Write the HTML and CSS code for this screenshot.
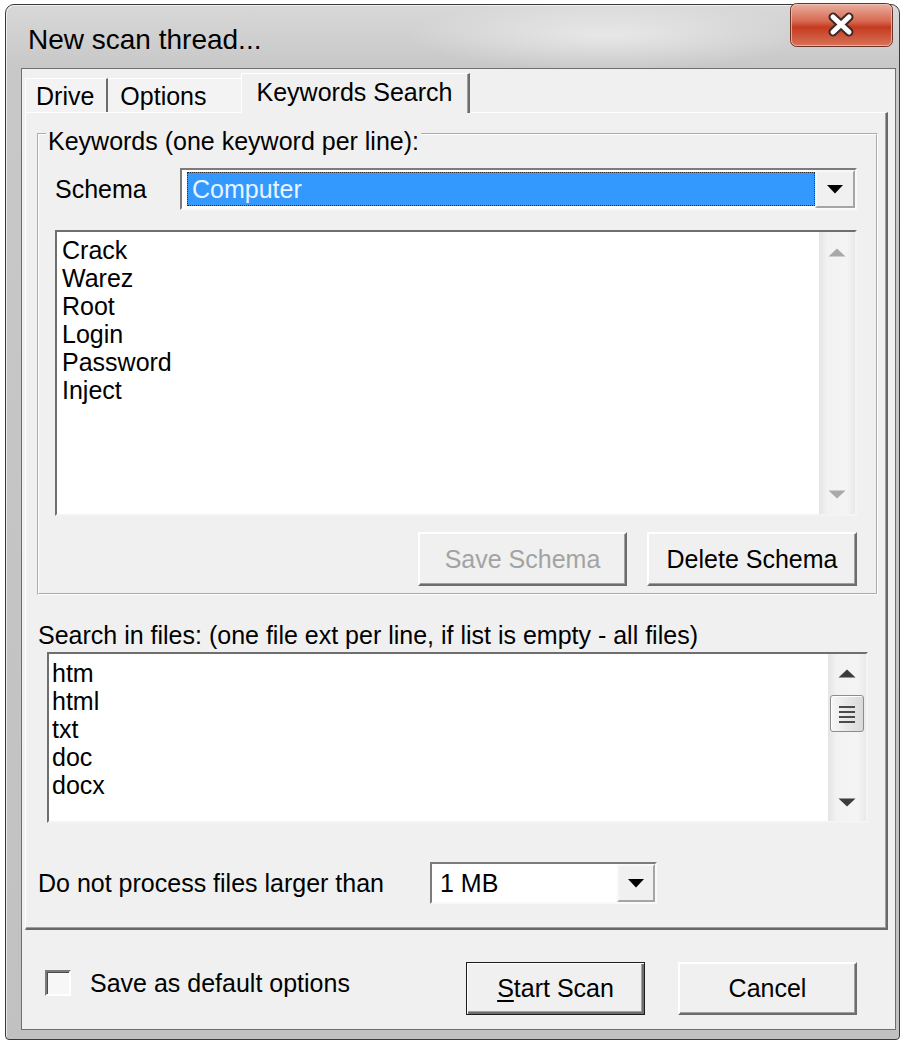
FILE: index.html
```html
<!DOCTYPE html>
<html lang="en">
<head>
<meta charset="utf-8">
<title>New scan thread...</title>
<link rel="stylesheet" href="styles.css">
</head>
<body>
<div class="window">
  <div class="titlebar">
    <span class="title">New scan thread...</span>
    <button class="close" aria-label="Close">
      <svg width="103" height="44" viewBox="0 0 103 44">
        <defs>
          <linearGradient id="closeFill" x1="0" y1="0" x2="0" y2="1">
            <stop offset="0" stop-color="#eab1a3"/>
            <stop offset="0.42" stop-color="#d7684f"/>
            <stop offset="0.55" stop-color="#c43a1f"/>
            <stop offset="1" stop-color="#d9745a"/>
          </linearGradient>
        </defs>
        <rect x="0.5" y="0.5" width="102" height="43" rx="6" fill="url(#closeFill)" stroke="#6a3329"/>
        <rect x="1.5" y="1.5" width="100" height="41" rx="5" fill="none" stroke="#f3c9bd" stroke-opacity="0.7"/>
        <path d="M43 14 L59 29 M59 14 L43 29" stroke="#3b2a28" stroke-width="9" stroke-linecap="round"/>
        <path d="M43 14 L59 29 M59 14 L43 29" stroke="#ffffff" stroke-width="5" stroke-linecap="round"/>
      </svg>
    </button>
  </div>

  <div class="client">
    <div class="tabs">
      <div class="tab tab-first">Drive</div>
      <div class="tab tab-second">Options</div>
      <div class="tab tab-active">Keywords Search</div>
    </div>

    <div class="tabpanel">
      <fieldset class="group">
        <legend>Keywords (one keyword per line):</legend>

        <div class="schema-row">
          <span class="row-label">Schema</span>
          <div class="combo combo-wide">
            <div class="combo-field selected">Computer</div>
            <div class="combo-btn">
              <svg width="16" height="9" viewBox="0 0 16 9"><polygon points="0,0 16,0 8,8.5" fill="#000"/></svg>
            </div>
          </div>
        </div>

        <div class="listbox kw-list">
          <div class="lines">
            <div>Crack</div>
            <div>Warez</div>
            <div>Root</div>
            <div>Login</div>
            <div>Password</div>
            <div>Inject</div>
          </div>
          <div class="vscroll vscroll-idle">
            <div class="sb-btn">
              <svg width="18" height="9" viewBox="0 0 18 9"><polygon points="0.5,8.5 9,0.5 17.5,8.5" fill="#a9a9a9"/></svg>
            </div>
            <div class="sb-btn">
              <svg width="18" height="9" viewBox="0 0 18 9"><polygon points="0.5,0.5 17.5,0.5 9,8.5" fill="#a9a9a9"/></svg>
            </div>
          </div>
        </div>

        <div class="btn-row">
          <button class="btn btn-save">Save Schema</button>
          <button class="btn btn-delete">Delete Schema</button>
        </div>
      </fieldset>

      <div class="field-label">Search in files: (one file ext per line, if list is empty - all files)</div>

      <div class="listbox ext-list">
        <div class="lines">
          <div>htm</div>
          <div>html</div>
          <div>txt</div>
          <div>doc</div>
          <div>docx</div>
        </div>
        <div class="vscroll">
          <div class="sb-btn">
            <svg width="18" height="9" viewBox="0 0 18 9"><polygon points="0.5,8.5 9,0.5 17.5,8.5" fill="#3c3c3c"/></svg>
          </div>
          <div class="thumb">
            <svg width="16" height="18" viewBox="0 0 16 18">
              <rect x="0" y="1" width="16" height="2" fill="#4a4a4a"/>
              <rect x="0" y="6" width="16" height="2" fill="#4a4a4a"/>
              <rect x="0" y="11" width="16" height="2" fill="#4a4a4a"/>
              <rect x="0" y="16" width="16" height="2" fill="#4a4a4a"/>
            </svg>
          </div>
          <div class="sb-spacer"></div>
          <div class="sb-btn">
            <svg width="18" height="9" viewBox="0 0 18 9"><polygon points="0.5,0.5 17.5,0.5 9,8.5" fill="#3c3c3c"/></svg>
          </div>
        </div>
      </div>

      <div class="size-row">
        <span class="row-label size-label">Do not process files larger than</span>
        <div class="combo combo-size">
          <div class="combo-field plain">1 MB</div>
          <div class="combo-btn">
            <svg width="16" height="9" viewBox="0 0 16 9"><polygon points="0,0 16,0 8,8.5" fill="#000"/></svg>
          </div>
        </div>
      </div>
    </div>

    <div class="footer">
      <label class="check"><span class="box"></span>Save as default options</label>
      <button class="btn btn-start"><u>S</u>tart Scan</button>
      <button class="btn btn-cancel">Cancel</button>
    </div>
  </div>
</div>
</body>
</html>
```

FILE: styles.css
```css
* {
  box-sizing: border-box;
}

html,
body {
  margin: 0;
  padding: 0;
  background: #ffffff;
}

body {
  font-family: "Liberation Sans", Arial, sans-serif;
  font-size: 25px;
  color: #000;
}

/* ---------- window frame ---------- */

.window {
  margin: 4px 0 0 5px;
  width: 895px;
  height: 1036px;
  border: 1px solid #3a3a3a;
  border-radius: 9px 9px 4px 4px;
  padding: 0 3px 9px 15px;
  display: flex;
  flex-direction: column;
  background:
    radial-gradient(ellipse 200px 36px at 600px 30px, rgba(255, 255, 255, 0.5), rgba(255, 255, 255, 0)),
    linear-gradient(#d8d8d8, #c8c8c8 62px, #c1c1c1);
  box-shadow: inset 1px 1px rgba(255, 255, 255, 0.6);
}

.titlebar {
  flex: none;
  height: 63px;
  display: flex;
  align-items: center;
  padding: 7px 0 0 7px;
}

.title {
  flex: 1;
  font-size: 28px;
  color: #000;
}

.close {
  align-self: flex-start;
  margin: -9px 3px 0 0;
  padding: 0;
  border: 0;
  background: none;
  width: 103px;
  height: 44px;
  display: block;
}

.close svg {
  display: block;
}

.client {
  flex: 1;
  display: flex;
  flex-direction: column;
  background: #f0f0f0;
  border: 1px solid #6f6f6f;
}

/* ---------- tabs ---------- */

.tabs {
  flex: none;
  height: 43px;
  display: flex;
  align-items: flex-end;
  padding-left: 3px;
}

.tab {
  height: 34px;
  line-height: 34px;
  border-top: 1px solid #ffffff;
  background: #f3f3f3;
}

.tab-first {
  padding: 0 12px 0 10px;
  border-left: 1px solid #ffffff;
  border-right: 2px solid #6d6d6d;
}

.tab-second {
  padding: 0 34px 0 12px;
}

.tab-active {
  position: relative;
  z-index: 1;
  height: 40px;
  line-height: 36px;
  margin-bottom: -1px;
  padding: 0 16px 0 15px;
  background: #f0f0f0;
  border-left: 1px solid #ffffff;
  border-right: 2px solid #6d6d6d;
  box-shadow: inset -1px 0 #a0a0a0;
}

.tabpanel {
  flex: none;
  height: 818px;
  margin: 0 7px 0 3px;
  border-style: solid;
  border-width: 1px 2px 2px 1px;
  border-color: #ffffff #696969 #696969 #ffffff;
  box-shadow: inset -1px -1px #a0a0a0;
  padding: 0 8px 0 11px;
}

/* ---------- group box ---------- */

.group {
  margin: 0;
  min-width: 0;
  border: 2px groove #ffffff;
  padding: 0 19px 7px 16px;
}

.group legend {
  padding: 14px 2px 0;
  margin-left: -9px;
  line-height: 28px;
}

.schema-row {
  display: flex;
  align-items: center;
  height: 42px;
  margin-top: 13px;
}

.row-label {
  flex: none;
  width: 125px;
}

/* ---------- combo boxes ---------- */

.combo {
  display: flex;
  height: 42px;
  border: 2px solid;
  border-color: #7b7b7b #f9f9f9 #f9f9f9 #7b7b7b;
  background: #ffffff;
}

.combo-wide {
  flex: 1;
}

.combo-field {
  flex: 1;
  display: flex;
  align-items: center;
  white-space: nowrap;
}

.combo-field.selected {
  margin: 2px 0 2px 5px;
  padding-left: 4px;
  background: #3399ff;
  border: 1px dotted #2b2b2b;
  color: #e9f4ff;
}

.combo-field.plain {
  padding-left: 8px;
}

.combo-btn {
  flex: none;
  width: 40px;
  display: flex;
  align-items: center;
  justify-content: center;
  background: #f0f0f0;
  border: 2px solid;
  border-color: #f8f8f8 #a5a5a5 #a5a5a5 #f8f8f8;
}

.combo-size .combo-btn {
  width: 38px;
}

/* ---------- list boxes ---------- */

.listbox {
  display: flex;
  border: 2px solid;
  border-color: #6f6f6f #f4f4f4 #f4f4f4 #6f6f6f;
  background: #ffffff;
}

.lines {
  flex: 1;
  line-height: 28px;
}

.kw-list {
  height: 286px;
  margin-top: 20px;
}

.kw-list .lines {
  padding: 4px 5px;
}

.ext-list {
  height: 171px;
  margin: 3px 10px 0 10px;
}

.ext-list .lines {
  padding: 5px 3px;
}

.vscroll {
  flex: none;
  width: 38px;
  display: flex;
  flex-direction: column;
  background: linear-gradient(to right, #e4e4e4, #f2f2f2 22%, #f4f4f4 78%, #e9e9e9);
}

.vscroll-idle {
  width: 36px;
  justify-content: space-between;
}

.sb-btn {
  flex: none;
  height: 38px;
  display: flex;
  align-items: center;
  justify-content: center;
}

.vscroll-idle .sb-btn {
  height: 40px;
}

.thumb {
  flex: none;
  height: 37px;
  margin: 3px 2px 0;
  display: flex;
  align-items: center;
  justify-content: center;
  border: 1px solid #8c8c8c;
  border-radius: 3px;
  background: linear-gradient(to right, #f7f7f7, #e6e6e6 55%, #d9d9d9);
  box-shadow: inset 1px 1px #ffffff;
}

.sb-spacer {
  flex: 1;
}

/* ---------- push buttons ---------- */

.btn {
  font: inherit;
  color: #000;
  padding: 0;
  background: #f0f0f0;
  border: 2px solid;
  border-color: #ffffff #6d6d6d #6d6d6d #ffffff;
  box-shadow: inset -1px -1px #a0a0a0;
}

.btn-row {
  display: flex;
  justify-content: flex-end;
  gap: 20px;
  margin-top: 16px;
}

.btn-row .btn {
  height: 54px;
}

.btn-save {
  width: 209px;
  color: #a3a3a3;
}

.btn-delete {
  width: 210px;
}

/* ---------- lower fields ---------- */

.field-label {
  margin-top: 26px;
  padding-left: 1px;
  line-height: 28px;
  white-space: nowrap;
}

.size-row {
  display: flex;
  align-items: center;
  height: 42px;
  margin-top: 39px;
}

.size-label {
  width: 393px;
  padding-left: 1px;
}

.combo-size {
  width: 227px;
}

/* ---------- footer ---------- */

.footer {
  flex: 1;
  display: flex;
  align-items: flex-start;
  padding: 32px 38px 0 23px;
}

.check {
  display: flex;
  align-items: center;
  gap: 19px;
  margin-top: 8px;
  line-height: 26px;
}

.box {
  width: 26px;
  height: 26px;
  border: 2px solid;
  border-color: #7a7a7a #ffffff #ffffff #7a7a7a;
  box-shadow: inset 1px 1px #4a4a4a;
  background: #f7f7f7;
}

.btn-start {
  margin-left: auto;
  width: 179px;
  height: 53px;
  border: 1px solid #1c1c1c;
  box-shadow: inset 1px 1px #ffffff, inset -2px -2px #6d6d6d, inset -3px -3px #a0a0a0;
}

.btn-start u {
  text-decoration-thickness: 2px;
  text-underline-offset: 3px;
}

.btn-cancel {
  width: 179px;
  height: 53px;
  margin-left: 33px;
}
```
